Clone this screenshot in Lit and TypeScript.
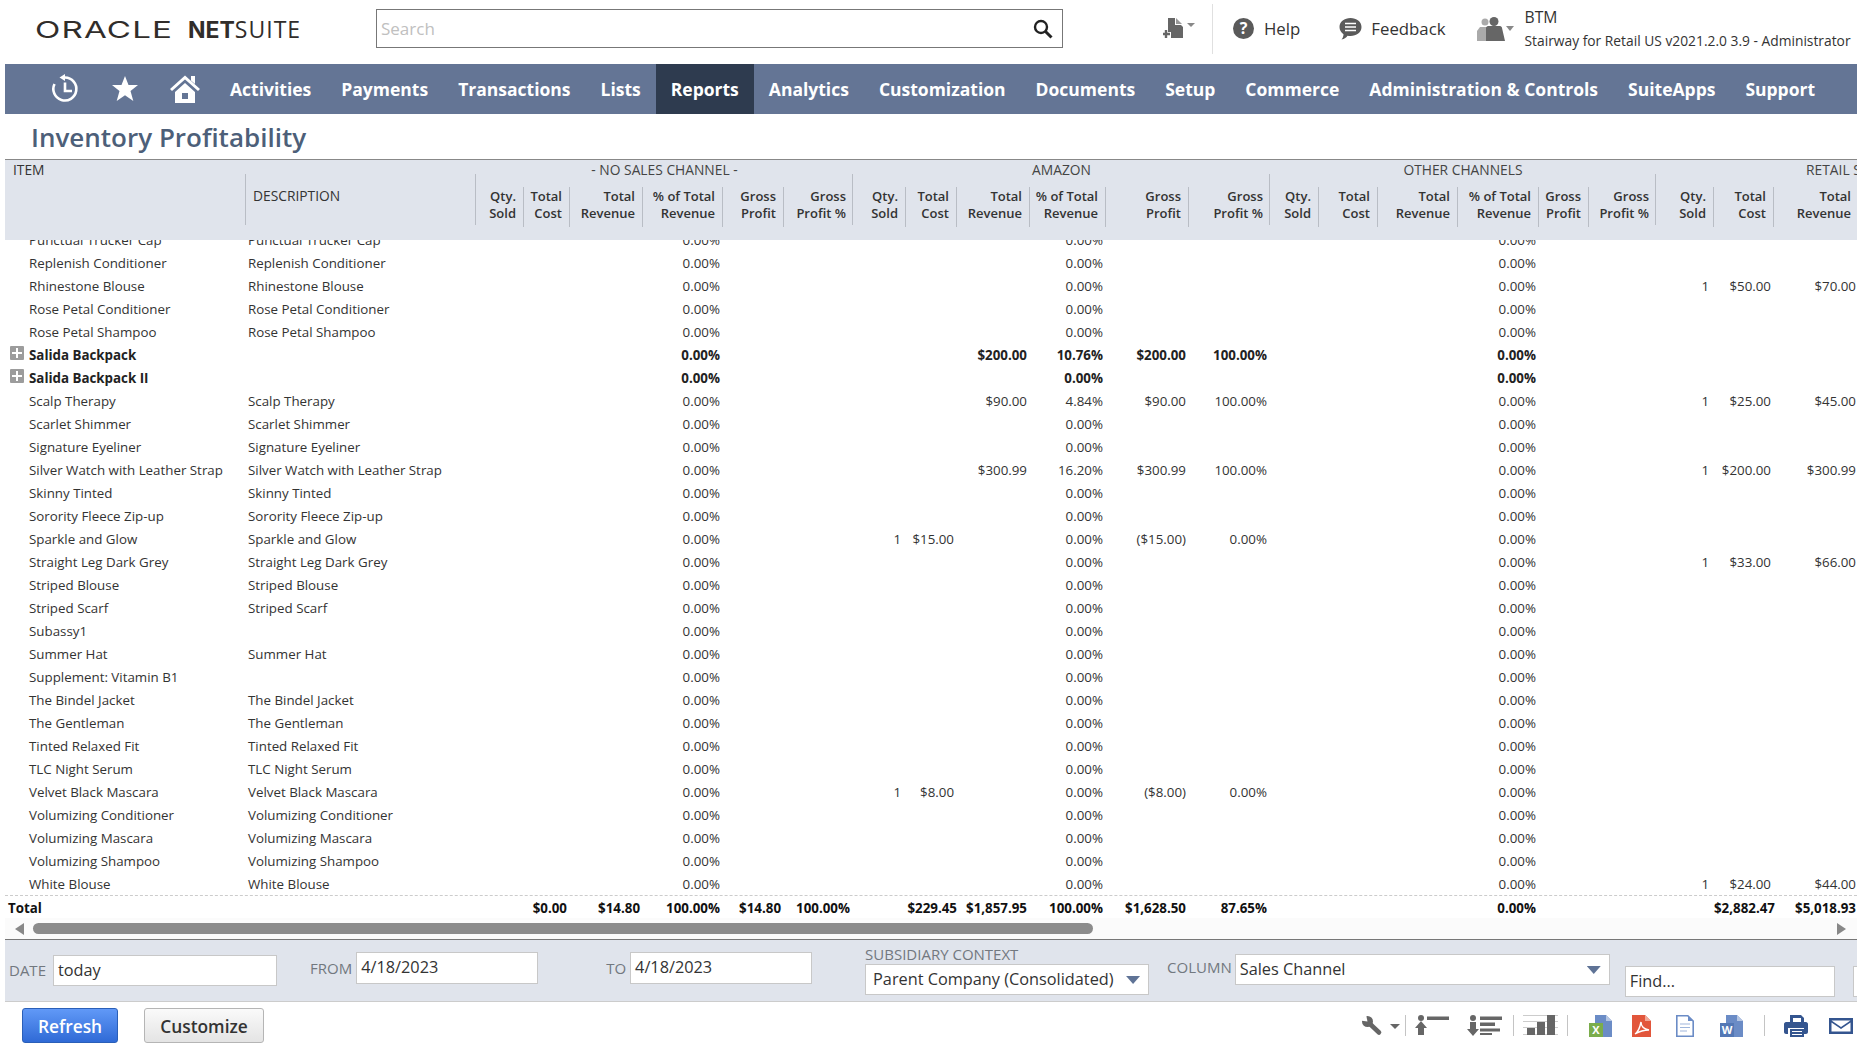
import { LitElement, html, css, svg } from 'lit';
import { customElement } from 'lit/decorators.js';

type Row = { name: string; desc?: string; bold?: boolean; vals?: Record<number, string> };

const NAV = ['Activities', 'Payments', 'Transactions', 'Lists', 'Reports', 'Analytics', 'Customization', 'Documents', 'Setup', 'Commerce', 'Administration & Controls', 'SuiteApps', 'Support'];
const COLS = ['Qty.<br>Sold', 'Total<br>Cost', 'Total<br>Revenue', '% of Total<br>Revenue', 'Gross<br>Profit', 'Gross<br>Profit %'];

const same = (name: string, vals?: Record<number, string>): Row => ({ name, desc: name, vals });

const ROWS: Row[] = [
  same('Punctual Trucker Cap'),
  same('Replenish Conditioner'),
  same('Rhinestone Blouse', { 18: '1', 19: '$50.00', 20: '$70.00' }),
  same('Rose Petal Conditioner'),
  same('Rose Petal Shampoo'),
  { name: 'Salida Backpack', bold: true, vals: { 8: '$200.00', 9: '10.76%', 10: '$200.00', 11: '100.00%' } },
  { name: 'Salida Backpack II', bold: true },
  same('Scalp Therapy', { 8: '$90.00', 9: '4.84%', 10: '$90.00', 11: '100.00%', 18: '1', 19: '$25.00', 20: '$45.00' }),
  same('Scarlet Shimmer'),
  same('Signature Eyeliner'),
  same('Silver Watch with Leather Strap', { 8: '$300.99', 9: '16.20%', 10: '$300.99', 11: '100.00%', 18: '1', 19: '$200.00', 20: '$300.99' }),
  same('Skinny Tinted'),
  same('Sorority Fleece Zip-up'),
  same('Sparkle and Glow', { 6: '1', 7: '$15.00', 10: '($15.00)', 11: '0.00%' }),
  same('Straight Leg Dark Grey', { 18: '1', 19: '$33.00', 20: '$66.00' }),
  same('Striped Blouse'),
  same('Striped Scarf'),
  { name: 'Subassy1' },
  same('Summer Hat'),
  { name: 'Supplement: Vitamin B1' },
  same('The Bindel Jacket'),
  same('The Gentleman'),
  same('Tinted Relaxed Fit'),
  same('TLC Night Serum'),
  same('Velvet Black Mascara', { 6: '1', 7: '$8.00', 10: '($8.00)', 11: '0.00%' }),
  same('Volumizing Conditioner'),
  same('Volumizing Mascara'),
  same('Volumizing Shampoo'),
  same('White Blouse', { 18: '1', 19: '$24.00', 20: '$44.00' }),
];

const TOTALS: Record<number, string> = {
  1: '$0.00', 2: '$14.80', 3: '100.00%', 4: '$14.80', 5: '100.00%',
  7: '$229.45', 8: '$1,857.95', 9: '100.00%', 10: '$1,628.50', 11: '87.65%',
  15: '0.00%', 19: '$2,882.47', 20: '$5,018.93',
};

const toolbarIcons = svg`
  <g fill="#666">
    <circle cx="1367.500" cy="1021.500" r="5.500"/>
    <path d="M1369 1023l10 9.500" stroke="#666" stroke-width="4.600" stroke-linecap="round"/>
    <path d="M1367.500 1021.500l-1.500-7-6 6z" fill="#fff"/>
    <path d="M1390 1024h10l-5 5z"/>
    <circle cx="1421" cy="1018" r="3"/>
    <path d="M1421 1021l6 7h-3v7h-6v-7h-3z"/>
    <rect x="1427" y="1016.500" width="22" height="3.500"/>
    <circle cx="1473" cy="1018" r="3"/>
    <path d="M1470 1022h6v7h3l-6 7-6-7h3z"/>
    <rect x="1480" y="1016.500" width="22" height="3.500"/>
    <rect x="1480" y="1022.500" width="15" height="3.500"/>
    <rect x="1480" y="1028.500" width="20" height="3"/>
    <rect x="1480" y="1033" width="12" height="2"/>
    <rect x="1523" y="1015" width="35" height="1" fill="#ccc"/>
    <rect x="1523" y="1021" width="35" height="1" fill="#ccc"/>
    <rect x="1523" y="1027" width="35" height="1" fill="#ccc"/>
    <rect x="1523" y="1034" width="35" height="1" fill="#ccc"/>
    <rect x="1527" y="1028" width="8" height="7"/>
    <rect x="1537" y="1022" width="8" height="13"/>
    <rect x="1547" y="1015" width="8" height="20"/>
  </g>
  <g fill="#c4c4c4">
    <rect x="1405" y="1015" width="1" height="21"/>
    <rect x="1513" y="1015" width="1" height="21"/>
    <rect x="1567" y="1015" width="1" height="21"/>
    <rect x="1764" y="1015" width="1" height="21"/>
  </g>
  <path d="M1595 1015h11l6 6v16h-17z" fill="#6b8cc6"/>
  <path d="M1606 1015l6 6h-6z" fill="#b5c6e3"/>
  <rect x="1589" y="1023" width="14" height="14" fill="#7bad4b"/>
  <text x="1596" y="1034" class="ico-letter">X</text>
  <path d="M1632 1015h13l6 6v16h-19z" fill="#e2563b"/>
  <path d="M1645 1015l6 6h-6z" fill="#f0a898"/>
  <path d="M1635 1034c3-2 5-7 6-12 0 4 3 7 8 8-5 0-9 1-14 4z" fill="none" stroke="#fff" stroke-width="1.400"/>
  <path d="M1676.800 1015.800h11l5.400 5.400v15h-16.400z" fill="#fff" stroke="#6b8cc6" stroke-width="1.600"/>
  <path d="M1688 1015.500l5 5.500h-5z" fill="#6b8cc6"/>
  <path d="M1680 1024h10M1680 1027.500h10M1680 1031h7" stroke="#9fb6dc" stroke-width="1.200"/>
  <path d="M1726 1015h11l6 6v16h-17z" fill="#6b8cc6"/>
  <path d="M1737 1015l6 6h-6z" fill="#b5c6e3"/>
  <rect x="1720" y="1023" width="14" height="14" fill="#5478b5"/>
  <text x="1727" y="1034" class="ico-letter">W</text>
  <g fill="#34558f">
    <path d="M1790 1015h11l3 3v5h-3v-5h-8v5h-3z"/>
    <path d="M1786 1022h20c1 0 2 1 2 2v8c0 1-1 2-2 2h-2v-6h-16v6h-2c-1 0-2-1-2-2v-8c0-1 1-2 2-2z"/>
    <path d="M1790 1029h14v8h-14zM1792 1031v1h10v-1zM1792 1034v1h10v-1z" fill-rule="evenodd"/>
  </g>
  <rect x="1829" y="1018" width="24" height="16" fill="#34558f"/>
  <path d="M1831.500 1020.500h19l-9.500 6.500z" fill="#fff"/>
  <path d="M1831.500 1022.500l9.500 6.500 9.500-6.500v9h-19z" fill="#fff"/>
`;

@customElement('app-root')
export class AppRoot extends LitElement {
  cell(val: string | undefined, i: number) {
    const cls = i === 6 || i === 18 ? 'num qty' : 'num';
    return html`<div class=${cls}>${val ?? ''}</div>`;
  }

  renderRow(r: Row) {
    const vals: Record<number, string> = { 3: '0.00%', 9: '0.00%', 15: '0.00%', ...(r.vals ?? {}) };
    const cells = Array.from({ length: 21 }, (_, i) => i);
    return html`
      <div class="row ${r.bold ? 'bold' : ''}">
        <div class="item">
          ${r.bold ? html`<span class="plus"></span>` : ''}
          ${r.name}
        </div>
        <div class="desc">${r.desc ?? ''}</div>
        ${cells.map((i) => this.cell(vals[i], i))}
      </div>
    `;
  }

  renderHeadCols(n: number) {
    const labels = Array.from({ length: n }, (_, i) => COLS[i % 6]);
    return labels.map((l, i) => {
      const parts = l.split('<br>');
      const start = i % 6 === 0 ? 'start' : '';
      const last = i % 6 === 5 ? 'last' : '';
      return html`<div class="th ${start} ${last}">${parts[0]}<br />${parts[1]}</div>`;
    });
  }

  render() {
    return html`
      <div class="top">
        <div class="logo"><span class="oracle">ORACLE</span><b>NET</b><span class="suite">SUITE</span></div>
        <div class="search">
          <span>Search</span>
          <svg width="20" height="20" viewBox="0 0 20 20"><circle cx="8" cy="8" r="6" fill="none" stroke="#222" stroke-width="2.400"/><path d="M12.500 12.500l6 6" stroke="#222" stroke-width="3"/></svg>
        </div>
        <svg class="new" width="33" height="24" viewBox="0 0 33 24">
          <path d="M5 1h7v7h6l2 2v11H8v-6H5z" fill="#666"/><path d="M13 1l6 6h-6z" fill="#999"/>
          <path d="M3 13v8M0 17h7" stroke="#666" stroke-width="2.400"/>
          <path d="M24 6h8l-4 4z" fill="#888"/>
        </svg>
        <div class="tdiv"></div>
        <svg class="help" width="21" height="21" viewBox="0 0 21 21"><circle cx="10.500" cy="10.500" r="10.500" fill="#5a5a5a"/><text x="10.500" y="16" class="ico-q">?</text></svg>
        <span class="toplink help-t">Help</span>
        <svg class="fb" width="23" height="23" viewBox="0 0 23 23">
          <path d="M11.500 1c6 0 11 3.500 11 9s-5 9-11 9c-1 0-2 0-3-.3-1 1.500-3 3.300-6 3.800 1.200-1.500 2-3 2-5.300C2 15.500.5 13 .5 10c0-5.500 5-9 11-9z" fill="#5a5a5a"/>
          <path d="M6 6.500h11M6 10h11M6 13.500h11" stroke="#fff" stroke-width="1.600"/>
        </svg>
        <span class="toplink fb-t">Feedback</span>
        <svg class="ppl" width="37" height="24" viewBox="0 0 37 24">
          <circle cx="8" cy="5" r="3.500" fill="#aaa"/><path d="M3 10h9v14H0v-10z" fill="#aaa"/>
          <circle cx="17" cy="4.500" r="4.500" fill="#666"/><path d="M9 11c0-1 1-2 2-2h12c1 0 2 1 2 2l3 13H9z" fill="#666"/>
          <path d="M29 9h8l-4 5z" fill="#888"/>
        </svg>
        <div class="who">
          <div class="org">BTM</div>
          <div class="role">Stairway for Retail US v2021.2.0 3.9 - Administrator</div>
        </div>
      </div>

      <nav class="nav">
        <svg class="ic-hist" width="30" height="30" viewBox="0 0 30 30">
          <path d="M15 3.500A11.500 11.500 0 1 1 4.500 10" fill="none" stroke="#fff" stroke-width="2.600"/>
          <path d="M15 0L9.500 3.500 15 7z" fill="#fff"/>
          <path d="M15 8.500V17H22" fill="none" stroke="#fff" stroke-width="2.600"/>
        </svg>
        <svg class="ic-star" width="26" height="26" viewBox="0 0 26 26"><path d="M13 0l3.500 9h9.500l-7.500 6 2.800 10L13 19.300 4.700 25l2.800-10L0 9h9.500z" fill="#fff"/></svg>
        <svg class="ic-home" width="30" height="28" viewBox="0 0 30 28">
          <path d="M1 15L15 2.500 29 15" fill="none" stroke="#fff" stroke-width="3"/>
          <path d="M21 1h4v8l-4-3.500z" fill="#fff"/>
          <path d="M5 17L15 8l10 9v11H5zM12 18v6h6v-6z" fill="#fff" fill-rule="evenodd"/>
        </svg>
        ${NAV.map((n) => html`<a class=${n === 'Reports' ? 'active' : ''}>${n}</a>`)}
      </nav>

      <div class="title">Inventory Profitability</div>

      <div class="table">
        <div class="thead">
          <div class="grp-item">ITEM</div>
          <div class="grp g1">- NO SALES CHANNEL -</div>
          <div class="grp g2">AMAZON</div>
          <div class="grp g3">OTHER CHANNELS</div>
          <div class="grp g4">RETAIL STORES</div>
          <div class="th-item"></div>
          <div class="th-desc start">DESCRIPTION</div>
          ${this.renderHeadCols(24)}
        </div>
        <div class="rows">
          <div class="rows-in">${ROWS.map((r) => this.renderRow(r))}</div>
        </div>
        <div class="row total">
          <div class="item">Total</div>
          <div class="desc"></div>
          <div class="num"></div>
          ${[1, 2, 3, 4, 5, 6, 7, 8, 9, 10, 11, 12, 13, 14, 15, 16, 17, 18, 19, 20].map(
            (i) => html`<div class="num ${i === 7 ? 'over' : i === 19 ? 'under' : ''}">${TOTALS[i] ?? ''}</div>`
          )}
        </div>
      </div>

      <div class="scroll">
        <svg width="9" height="12" viewBox="0 0 9 12"><path d="M9 0v12L0 6z" fill="#888"/></svg>
        <div class="thumb"></div>
        <svg width="9" height="12" viewBox="0 0 9 12"><path d="M0 0v12l9-6z" fill="#888"/></svg>
      </div>

      <div class="filters">
        <label class="lb">DATE</label><div class="box f-date">today</div>
        <label class="lb l-from">FROM</label><div class="box f-from">4/18/2023</div>
        <label class="lb l-to">TO</label><div class="box f-to">4/18/2023</div>
        <div class="sub">
          <label class="lb">SUBSIDIARY CONTEXT</label>
          <div class="box f-sub">Parent Company (Consolidated)<i class="tri"></i></div>
        </div>
        <label class="lb l-col">COLUMN</label><div class="box f-col">Sales Channel<i class="tri"></i></div>
        <div class="box f-find">Find...</div>
        <div class="box f-more"></div>
      </div>

      <div class="bottom">
        <button class="btn primary">Refresh</button>
        <button class="btn plain">Customize</button>
        <svg class="tools" width="497" height="34" viewBox="1360 1008 497 34">${toolbarIcons}</svg>
      </div>
    `;
  }

  static styles = css`
    :host {
      display: block;
      width: 1857px;
      height: 1053px;
      overflow: hidden;
      background: #fff;
      color: #333;
      font-family: 'Open Sans', sans-serif;
      font-size: 13.330px;
      --cols: 241px 230px 48px 46px 73px 80px 61px 69px 53px 51px 73px 76px 83px 81px 49px 59px 80px 81px 50px 67px 58px 60px 85px 64px 60px 70px;
    }

    .top {
      display: flex;
      align-items: center;
      height: 64px;
      box-sizing: border-box;
      padding-bottom: 7px;
      white-space: nowrap;
    }
    .logo {
      display: flex;
      align-items: baseline;
      flex: none;
      width: 376px;
      padding-left: 35px;
      box-sizing: border-box;
      font-family: Inter, sans-serif;
      font-size: 23px;
      color: #312d2a;
    }
    .oracle {
      display: block;
      flex: none;
      width: 139px;
      margin-right: 14px;
      letter-spacing: 0.800px;
      transform: scaleX(1.440);
      transform-origin: left;
    }
    .logo b {
      font-weight: 700;
    }
    .suite {
      font-family: 'Open Sans', sans-serif;
      font-weight: 400;
      letter-spacing: 1px;
    }
    .search {
      display: flex;
      align-items: center;
      justify-content: space-between;
      flex: none;
      width: 687px;
      height: 39px;
      box-sizing: border-box;
      padding: 0 9px 0 4px;
      border: 1px solid #777;
      font-size: 17px;
      color: #c0c0c0;
    }
    .new {
      margin-left: 100px;
    }
    .tdiv {
      width: 1px;
      height: 50px;
      margin-left: 16px;
      background: #e0e0e0;
    }
    .help {
      margin-left: 20px;
    }
    .toplink {
      font-size: 16.800px;
      font-weight: 500;
      color: #333;
    }
    .help-t {
      margin-left: 10px;
    }
    .fb {
      margin-left: 39px;
    }
    .fb-t {
      margin-left: 9px;
    }
    .ppl {
      margin-left: 31px;
    }
    .who {
      margin-left: 11px;
      line-height: 23px;
      color: #333;
    }
    .org {
      font-size: 15.700px;
    }
    .role {
      font-size: 13.800px;
    }

    .nav {
      display: flex;
      align-items: center;
      height: 50px;
      margin-left: 5px;
      background: #647595;
    }
    .ic-hist {
      margin-left: 45px;
    }
    .ic-star {
      margin-left: 32px;
    }
    .ic-home {
      margin: 0 15px 0 32px;
    }
    .nav a {
      display: flex;
      align-items: center;
      height: 50px;
      padding: 0 15px;
      color: #fff;
      font-size: 17.500px;
      font-weight: 700;
      white-space: nowrap;
    }
    .nav a.active {
      background: #2e3b4f;
    }

    .title {
      height: 45px;
      padding: 2px 0 0 31px;
      box-sizing: border-box;
      line-height: 43px;
      font-size: 26px;
      font-weight: 600;
      color: #4d5f79;
    }

    .table {
      margin-left: 5px;
      overflow: hidden;
    }
    .thead {
      display: grid;
      grid-template-columns: var(--cols);
      grid-template-rows: 27px 40px;
      height: 80px;
      border-top: 1px solid #888;
      background: #e0e4ec;
      color: #333;
    }
    .grp-item {
      padding-left: 8px;
      font-size: 13.800px;
      line-height: 19px;
      grid-column: 1;
    }
    .grp {
      font-size: 13.800px;
      line-height: 19px;
      text-align: center;
      color: #444;
    }
    .g1 {
      grid-column: 3 / span 6;
    }
    .g2 {
      grid-column: 9 / span 6;
    }
    .g3 {
      grid-column: 15 / span 6;
    }
    .g4 {
      grid-column: 21 / span 6;
    }
    .th-desc {
      position: relative;
      padding-left: 7px;
      font-size: 13.800px;
      line-height: 17px;
    }
    .th {
      position: relative;
      padding: 1px 7px 0 0;
      font-size: 13px;
      line-height: 17px;
      text-align: right;
      font-weight: 600;
      white-space: nowrap;
      border-right: 1px solid #b9bdc5;
    }
    .th.last {
      border-right: 0;
    }
    .start::before {
      content: '';
      position: absolute;
      left: -1px;
      top: -13px;
      bottom: 2px;
      width: 1px;
      background: #b9bdc5;
    }

    .rows {
      height: 655px;
      overflow: hidden;
    }
    .rows-in {
      margin-top: -11px;
    }
    .row {
      display: grid;
      grid-template-columns: var(--cols);
      height: 23px;
      line-height: 23px;
      white-space: nowrap;
    }
    .row.bold {
      font-weight: 700;
      color: #222;
    }
    .item {
      display: flex;
      padding-left: 24px;
    }
    .bold .item {
      padding-left: 5px;
    }
    .plus {
      position: relative;
      flex: none;
      width: 14px;
      height: 14px;
      margin: 1.500px 5px 0 0;
      border-radius: 1px;
      background: #9c9c9c;
    }
    .plus::before {
      content: '';
      position: absolute;
      left: 6px;
      top: 2px;
      width: 2px;
      height: 10px;
      background: #fff;
    }
    .plus::after {
      content: '';
      position: absolute;
      left: 2px;
      top: 6px;
      width: 10px;
      height: 2px;
      background: #fff;
    }
    .desc {
      padding-left: 2px;
    }
    .num {
      padding-right: 3px;
      text-align: right;
    }
    .qty {
      padding-right: 5px;
    }
    .total {
      height: 22px;
      line-height: 24px;
      border-top: 1px dashed #ccc;
      font-weight: 700;
      color: #111;
    }
    .total .item {
      padding-left: 3px;
    }
    .num.over {
      padding-right: 0;
    }
    .num.under {
      padding-right: 10px;
    }

    .scroll {
      display: flex;
      align-items: center;
      height: 21px;
      margin-left: 5px;
      padding: 0 11px 0 10px;
      background: #fbfbfb;
    }
    .thumb {
      width: 1060px;
      height: 11px;
      margin: 0 auto 0 9px;
      border-radius: 6px;
      background: #8c8c8c;
    }

    .filters {
      display: flex;
      align-items: flex-start;
      height: 63px;
      margin-left: 5px;
      padding-left: 4px;
      box-sizing: border-box;
      overflow: hidden;
      border-top: 1px solid #777;
      border-bottom: 1px solid #ccc;
      background: #e0e4ec;
      white-space: nowrap;
    }
    .lb {
      flex: none;
      margin-top: 20px;
      font-size: 15px;
      line-height: 20px;
      color: #72787f;
    }
    .box {
      position: relative;
      box-sizing: border-box;
      flex: none;
      height: 31px;
      padding-left: 4px;
      border: 1px solid #c8c8c8;
      background: #fff;
      font-size: 16.300px;
      line-height: 29px;
      color: #333;
    }
    .f-date {
      width: 224px;
      margin: 15px 0 0 7px;
    }
    .l-from {
      margin: 18px 4px 0 33px;
    }
    .f-from {
      width: 182px;
      height: 32px;
      margin-top: 12px;
    }
    .l-to {
      margin: 18px 4px 0 68px;
    }
    .f-to {
      width: 182px;
      height: 32px;
      margin-top: 12px;
    }
    .sub {
      display: flex;
      flex-direction: column;
      margin-left: 53px;
    }
    .sub .lb {
      margin-top: 5px;
      line-height: 19px;
    }
    .f-sub {
      width: 284px;
      padding-left: 7px;
    }
    .l-col {
      margin: 17px 3px 0 18px;
    }
    .f-col {
      width: 375px;
      margin-top: 14px;
    }
    .f-find {
      width: 210px;
      margin: 26px 0 0 15px;
    }
    .f-more {
      width: 60px;
      margin: 26px 0 0 18px;
    }
    .tri {
      position: absolute;
      right: 8px;
      top: 11px;
      width: 14px;
      height: 8px;
      background: #5f7396;
      clip-path: polygon(0 0, 100% 0, 50% 100%);
    }

    .bottom {
      display: flex;
      align-items: flex-start;
      padding: 6px 0 0 22px;
    }
    .btn {
      height: 35px;
      box-sizing: border-box;
      border-radius: 3px;
      font-family: inherit;
      font-size: 17.330px;
      font-weight: 600;
    }
    .primary {
      width: 96px;
      border: 1px solid #2a5fb8;
      background: linear-gradient(#6199f7, #2f6ad6);
      color: #fff;
    }
    .plain {
      width: 120px;
      margin-left: 26px;
      border: 1px solid #b5b5b5;
      background: linear-gradient(#fafafa, #e4e4e4);
      color: #333;
    }
    .tools {
      display: block;
      margin-left: auto;
    }
    .ico-letter {
      font-family: 'Open Sans', sans-serif;
      font-size: 11px;
      font-weight: 700;
      fill: #fff;
      text-anchor: middle;
    }
    .ico-q {
      font-family: 'Open Sans', sans-serif;
      font-size: 16px;
      font-weight: 700;
      fill: #fff;
      text-anchor: middle;
    }
  `;
}
